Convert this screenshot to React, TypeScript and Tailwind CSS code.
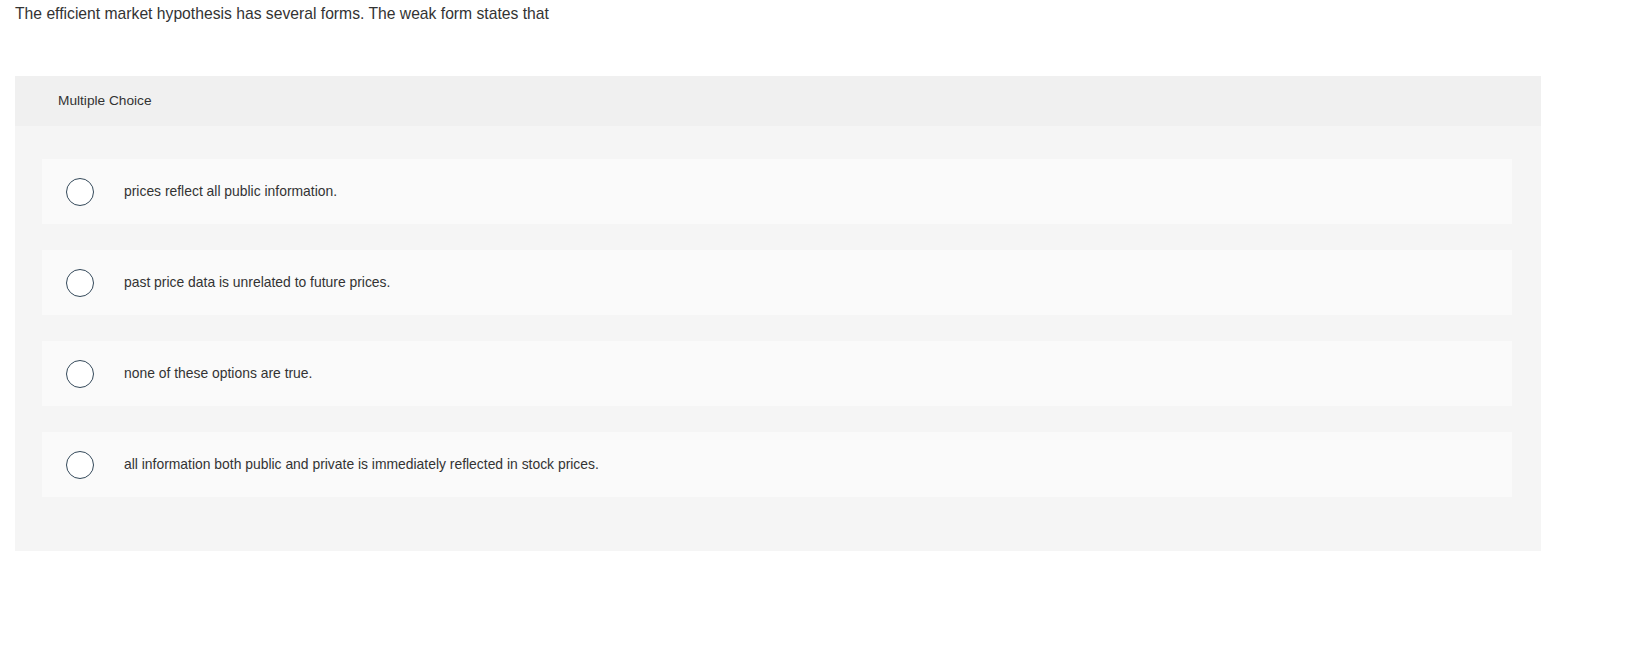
const OPTIONS = [
  "prices reflect all public information.",
  "past price data is unrelated to future prices.",
  "none of these options are true.",
  "all information both public and private is immediately reflected in stock prices.",
];

export default function App() {
  return (
    <div className="min-h-screen bg-white px-[15px] pt-1 font-['Liberation_Sans',Arial,sans-serif] text-[#333]">
      <p className="text-[15.7px] leading-5">
        The efficient market hypothesis has several forms. The weak form states that
      </p>

      <div className="mt-[52px] w-[1526px]">
        <div className="flex h-[50px] items-center bg-[#f0f0f0] pl-[43px] text-[13.7px] text-[#333]">
          Multiple Choice
        </div>

        <div className="flex flex-col gap-[26px] bg-[#f5f5f5] pt-[33px] pb-[54px] pl-[27px] pr-[29px]">
          {OPTIONS.map((opt) => (
            <label
              key={opt}
              className="flex h-[65px] cursor-pointer items-center gap-[30px] bg-[#fafafa] pl-6"
            >
              <span className="h-7 w-7 shrink-0 rounded-full border-[1.5px] border-[#34495a] bg-white" />
              <span className="text-[13.9px] text-[#333]">{opt}</span>
            </label>
          ))}
        </div>
      </div>
    </div>
  );
}
